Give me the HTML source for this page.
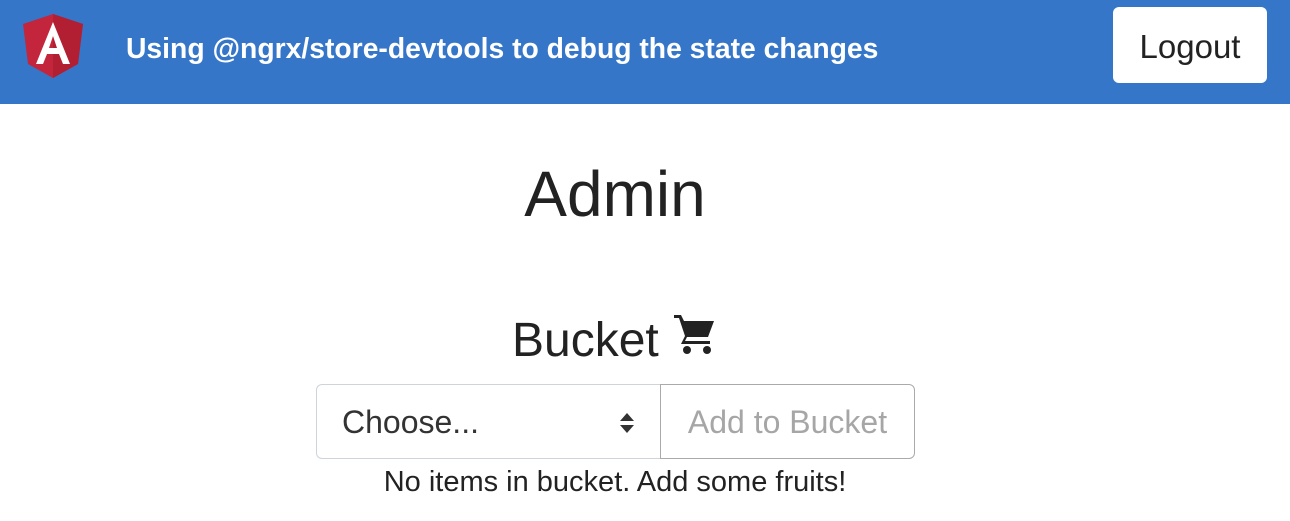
<!DOCTYPE html>
<html><head><meta charset="utf-8"><style>
*{box-sizing:border-box;margin:0;padding:0}
body{width:1290px;height:521px;background:#fff;font-family:"Liberation Sans",sans-serif;color:#333;position:relative;overflow:hidden}
.nav{position:absolute;left:0;top:0;width:1290px;height:104px;background:#3576c9}
.title{position:absolute;left:126px;top:32px;font-size:28.3px;color:#fff;font-weight:bold;white-space:nowrap}
.logout{position:absolute;left:1113px;top:7px;width:154px;height:76px;background:#fff;border-radius:6px;font-size:33px;color:#222;text-align:center;line-height:80px}
h1{position:absolute;left:0;width:1230px;text-align:center;top:157px;font-size:64px;font-weight:400;color:#222}
.bucket{position:absolute;left:512px;top:313px;font-size:48px;color:#222}
.sel{position:absolute;left:316px;top:384px;width:345px;height:75px;border:1.5px solid #ced4da;border-right:none;border-radius:6px 0 0 6px;font-size:32px;line-height:75px;padding-left:25px;color:#333}
.btn{position:absolute;left:660px;top:384px;width:255px;height:75px;border:1.5px solid #aaa;border-radius:0 6px 6px 0;font-size:32px;line-height:75px;text-align:center;color:#a6a6a6;white-space:nowrap}
.msg{position:absolute;left:0;width:1230px;text-align:center;top:466px;font-size:29px;color:#222}
</style></head><body>
<div class="nav">
<svg style="position:absolute;left:23px;top:14px" width="60" height="65" viewBox="0 0 60 65">
<polygon points="30,0 60,10 55,50 30,64 5,50 0,10" fill="#c3253c"/>
<polygon points="30,0 60,10 55,50 30,64" fill="#b21f33"/>
<path d="M30 8 L13 50 H20 L24 40 H36 L40 50 H47 Z M26 34 L30 22 L34 34 Z" fill="#fff"/>
</svg>
<div class="title">Using @ngrx/store-devtools to debug the state changes</div>
<div class="logout">Logout</div>
</div>
<h1>Admin</h1>
<div class="bucket">Bucket <svg style="position:absolute;left:160px;top:0px" width="44" height="42" viewBox="0 0 44 42"><path d="M2 2 H9 L12 8 H42 L36 24 H15 L13 28 H38 V31 H9 L13 23 L7 5 H2 Z" fill="#222"/><circle cx="15" cy="37" r="4" fill="#222"/><circle cx="35" cy="37" r="4" fill="#222"/></svg></div>
<div class="sel">Choose...<svg style="position:absolute;left:302px;top:28px" width="16" height="20" viewBox="0 0 16 20"><path d="M8 0 L15 8 H1 Z M8 20 L15 12 H1 Z" fill="#333"/></svg></div>
<div class="btn">Add to Bucket</div>
<div class="msg">No items in bucket. Add some fruits!</div>
</body></html>
